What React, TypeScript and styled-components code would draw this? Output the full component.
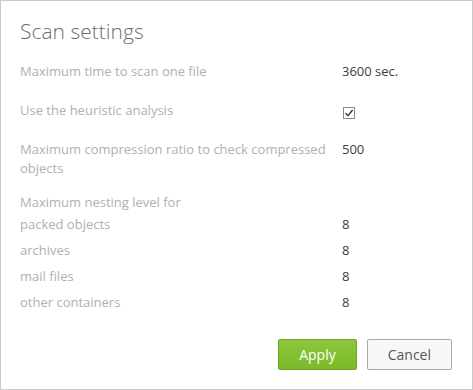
import React from "react";
import styled, { createGlobalStyle } from "styled-components";

const Global = createGlobalStyle`
  html, body { margin: 0; padding: 0; background: #ffffff; }
  body { font-family: "Open Sans", "Noto Sans", sans-serif; }
  * { box-sizing: border-box; }
`;

const Dialog = styled.div`
  width: 473px;
  height: 390px;
  border: 1px solid #c9c9c9;
  background: #fff;
  padding: 15px 20px 19px 19px;
  display: flex;
  flex-direction: column;
`;

const Title = styled.h1`
  margin: 0;
  font-family: "Open Sans Light", "Open Sans", "Noto Sans", sans-serif;
  font-size: 21px;
  line-height: 30px;
  font-weight: 300;
  color: #6e6e6e;
`;

const Body = styled.div`
  margin-top: 16px;
  display: flex;
  flex-direction: column;
  gap: 20px;
`;

const Row = styled.div`
  display: grid;
  grid-template-columns: 311px 1fr;
  column-gap: 11px;
  font-size: 13px;
  line-height: 19px;
`;

const Label = styled.div`
  color: #b0b0b0;
`;

const Value = styled.div`
  color: #3c3c3c;
`;

const Group = styled.div<{ $shift?: number }>`
  display: flex;
  flex-direction: column;
  gap: 7px;
  margin-top: ${(p) => p.$shift ?? 0}px;
`;

const GroupHeading = styled.div`
  font-size: 13px;
  line-height: 19px;
  color: #b0b0b0;
  margin-bottom: -4px;
`;

const CheckBox = styled.span`
  display: inline-flex;
  align-items: center;
  justify-content: center;
  width: 12px;
  height: 12px;
  margin-left: 1px;
  margin-top: 6px;
  border: 1px solid #8a8a8a;
  background: #fff;
  vertical-align: top;
`;

const Footer = styled.div`
  margin-top: auto;
  display: flex;
  justify-content: flex-end;
  gap: 10px;
`;

const Button = styled.button<{ $primary?: boolean }>`
  height: 31px;
  padding: 0 20px;
  font-family: "Open Sans", "Noto Sans", sans-serif;
  font-size: 14px;
  border-radius: 2px;
  cursor: pointer;
  border: 1px solid ${(p) => (p.$primary ? "#6da51f" : "#a9a9a9")};
  background: ${(p) =>
    p.$primary ? "linear-gradient(#8cc63c, #7bba2a)" : "#f7f8fa"};
  color: ${(p) => (p.$primary ? "#ffffff" : "#555555")};
`;

const Check = () => (
  <svg width="10" height="10" viewBox="0 0 10 10">
    <path d="M1.5 5.2 L4 7.6 L8.6 2" fill="none" stroke="#222" strokeWidth="1.2" />
  </svg>
);

export default function App() {
  return (
    <>
      <Global />
      <Dialog>
        <Title>Scan settings</Title>
        <Body>
          <Row>
            <Label>Maximum time to scan one file</Label>
            <Value>3600 sec.</Value>
          </Row>
          <Row>
            <Label>Use the heuristic analysis</Label>
            <Value>
              <CheckBox>
                <Check />
              </CheckBox>
            </Value>
          </Row>
          <Row>
            <Label>Maximum compression ratio to check compressed objects</Label>
            <Value>500</Value>
          </Row>
          <Group $shift={-5}>
            <GroupHeading>Maximum nesting level for</GroupHeading>
            <Row>
              <Label>packed objects</Label>
              <Value>8</Value>
            </Row>
            <Row>
              <Label>archives</Label>
              <Value>8</Value>
            </Row>
            <Row>
              <Label>mail files</Label>
              <Value>8</Value>
            </Row>
            <Row>
              <Label>other containers</Label>
              <Value>8</Value>
            </Row>
          </Group>
        </Body>
        <Footer>
          <Button $primary>Apply</Button>
          <Button>Cancel</Button>
        </Footer>
      </Dialog>
    </>
  );
}
